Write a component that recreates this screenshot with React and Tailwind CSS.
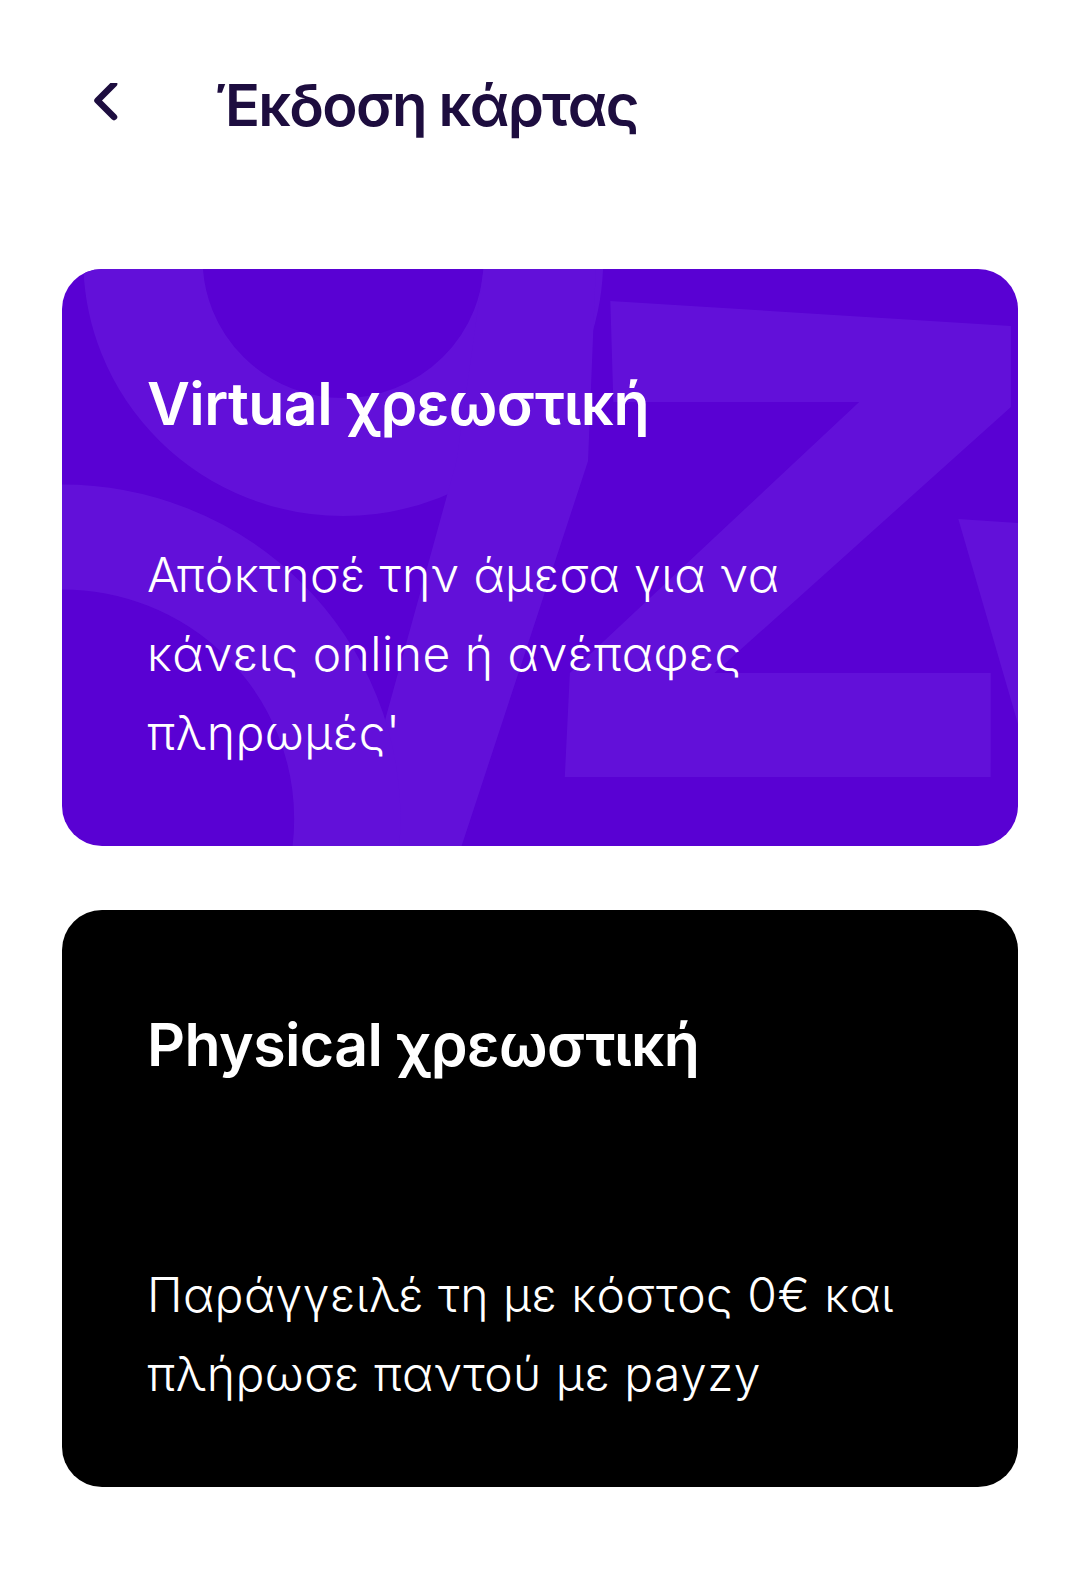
import { useMemo } from 'react'

// Decorative letter shapes behind the virtual card text
function CardPattern() {
  return (
    <svg
      className="absolute inset-0 w-full h-full pointer-events-none"
      viewBox="0 0 945 577"
      preserveAspectRatio="none"
      aria-hidden="true"
    >
      <g fill="#6210d9" stroke="none">
        <path d="M80 -10 A198 198 0 0 0 476 -10" fill="none" stroke="#6210d9" strokeWidth="118" />
        <polygon points="418,-10 528,-10 520,192 395,577 285,577 390,192" />
        <circle cx="0" cy="550" r="282" fill="none" stroke="#6210d9" strokeWidth="105" />
        <polygon points="542,32 938,57 938,138 645,404 918,404 918,508 497,508 502,404 788,133 545,133" />
        <polygon points="886,250 945,254 945,455" />
      </g>
    </svg>
  )
}

function CardOption({ title, lines, dark, pattern }) {
  return (
    <button
      className={
        'relative overflow-hidden w-full h-[577px] shrink-0 rounded-[40px] text-left flex flex-col justify-between pl-[85px] pr-[40px] pt-[97px] pb-[74px] ' +
        (dark ? 'bg-black' : 'bg-[#5901d3]')
      }
    >
      {pattern && <CardPattern />}
      <h2 className="relative text-white font-semibold text-[59px] leading-[76px] tracking-[-0.01em]">
        {title}
      </h2>
      <div className="relative">
        {lines.map(line => (
          <p key={line} className="text-white text-[48px] leading-[79px] tracking-[0.01em] font-light">
            {line}
          </p>
        ))}
      </div>
    </button>
  )
}

export default function App() {
  const cards = useMemo(() => [
    {
      title: 'Virtual χρεωστική',
      lines: ['Απόκτησέ την άμεσα για να', 'κάνεις online ή ανέπαφες', "πληρωμές'"],
      pattern: true,
    },
    {
      title: 'Physical χρεωστική',
      lines: ['Παράγγειλέ τη με κόστος 0€ και', 'πλήρωσε παντού με payzy'],
      dark: true,
    },
  ], [])

  return (
    <div
      className="min-h-[1582px] w-[1080px] bg-white px-[62px] pt-[62px]"
      style={{ fontFamily: 'Inter, "Noto Sans", sans-serif' }}
    >
      {/* Header */}
      <div className="h-[86px] flex items-center">
        <button className="w-[153px] flex items-center pl-[29px] text-[#1d0d3f]">
          <svg width="32" height="44" viewBox="0 0 32 44" fill="none">
            <polyline
              points="23,1 6.5,17.5 23,34"
              stroke="currentColor"
              strokeWidth="6.5"
              strokeLinecap="round"
              strokeLinejoin="round"
            />
          </svg>
        </button>
        <h1 className="text-[#1d0d3f] text-[58px] font-semibold tracking-[-0.03em] leading-none">
          Έκδοση κάρτας
        </h1>
      </div>

      <div className="mt-[121px] flex flex-col gap-[64px]">
        {cards.map(c => (
          <CardOption key={c.title} {...c} />
        ))}
      </div>
    </div>
  )
}
